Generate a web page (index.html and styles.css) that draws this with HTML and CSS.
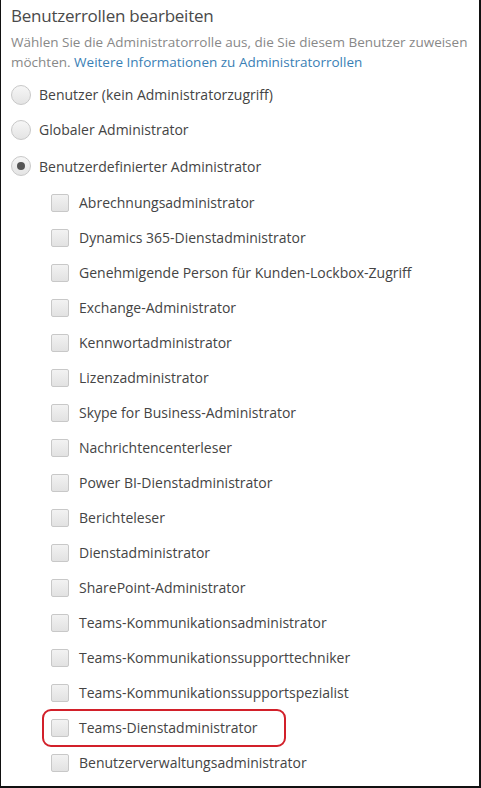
FILE: index.html
```html
<!DOCTYPE html>
<html lang="de">
<head>
  <meta charset="UTF-8">
  <title>Benutzerrollen bearbeiten</title>
  <link rel="stylesheet" href="styles.css">
</head>
<body>
  <div class="panel">
    <h2 class="title">Benutzerrollen bearbeiten</h2>
    <p class="desc">Wählen Sie die Administratorrolle aus, die Sie diesem Benutzer zuweisen möchten. <a href="#">Weitere Informationen zu Administratorrollen</a></p>

    <ul class="roles">
      <li class="radio-row"><span class="radio"></span>Benutzer (kein Administratorzugriff)</li>
      <li class="radio-row"><span class="radio"></span>Globaler Administrator</li>
      <li class="radio-row last"><span class="radio checked"></span>Benutzerdefinierter Administrator</li>
    </ul>

    <ul class="admins">
      <li class="check-row"><span class="box"></span>Abrechnungsadministrator</li>
      <li class="check-row"><span class="box"></span>Dynamics 365-Dienstadministrator</li>
      <li class="check-row"><span class="box"></span>Genehmigende Person für Kunden-Lockbox-Zugriff</li>
      <li class="check-row"><span class="box"></span>Exchange-Administrator</li>
      <li class="check-row"><span class="box"></span>Kennwortadministrator</li>
      <li class="check-row"><span class="box"></span>Lizenzadministrator</li>
      <li class="check-row"><span class="box"></span>Skype for Business-Administrator</li>
      <li class="check-row"><span class="box"></span>Nachrichtencenterleser</li>
      <li class="check-row"><span class="box"></span>Power BI-Dienstadministrator</li>
      <li class="check-row"><span class="box"></span>Berichteleser</li>
      <li class="check-row"><span class="box"></span>Dienstadministrator</li>
      <li class="check-row"><span class="box"></span>SharePoint-Administrator</li>
      <li class="check-row"><span class="box"></span>Teams-Kommunikationsadministrator</li>
      <li class="check-row"><span class="box"></span>Teams-Kommunikationssupporttechniker</li>
      <li class="check-row"><span class="box"></span>Teams-Kommunikationssupportspezialist</li>
      <li class="check-row marked"><span class="box"></span>Teams-Dienstadministrator</li>
      <li class="check-row"><span class="box"></span>Benutzerverwaltungsadministrator</li>
    </ul>
  </div>
</body>
</html>
```

FILE: styles.css
```css
* {
  box-sizing: border-box;
}

body {
  margin: 0;
  font-family: 'Open Sans', sans-serif;
  background: #fff;
}

.panel {
  width: 481px;
  height: 788px;
  padding: 4px 10px 0 10px;
  border-left: 1px solid #111;
  border-right: 2px solid #111;
  border-bottom: 2px solid #111;
  overflow: hidden;
}

.title {
  margin: 0;
  font-size: 17px;
  font-weight: 400;
  line-height: 24px;
  letter-spacing: -0.25px;
  color: #4a4a4a;
}

.desc {
  margin: 4px 0 0 0;
  font-size: 13.5px;
  line-height: 20px;
  color: #888;
}

.desc a {
  color: #3a80b5;
  text-decoration: none;
}

ul {
  list-style: none;
  margin: 0;
  padding: 0;
}

.roles {
  margin-top: 5px;
}

.radio-row,
.check-row {
  display: flex;
  align-items: center;
  height: 35px;
  font-size: 14px;
  color: #444;
}

.radio-row.last {
  height: 38px;
}

.radio {
  width: 20px;
  height: 20px;
  margin-right: 8px;
  border-radius: 50%;
  border: 1px solid #c8c8c8;
  background: linear-gradient(#f6f6f6, #e4e4e4);
  display: flex;
  align-items: center;
  justify-content: center;
}

.radio.checked::after {
  content: "";
  width: 8px;
  height: 8px;
  border-radius: 50%;
  background: #555;
}

.admins {
  padding-left: 40px;
}

.box {
  width: 18px;
  height: 18px;
  margin-right: 10px;
  border-radius: 2px;
  border: 1px solid #c8c8c8;
  background: linear-gradient(#f2f2f2, #e2e2e2);
}

.marked {
  position: relative;
}

.marked::after {
  content: "";
  position: absolute;
  left: -9px;
  top: -1px;
  width: 240px;
  height: 34px;
  border: 2px solid #d2202a;
  border-radius: 9px;
}
```
